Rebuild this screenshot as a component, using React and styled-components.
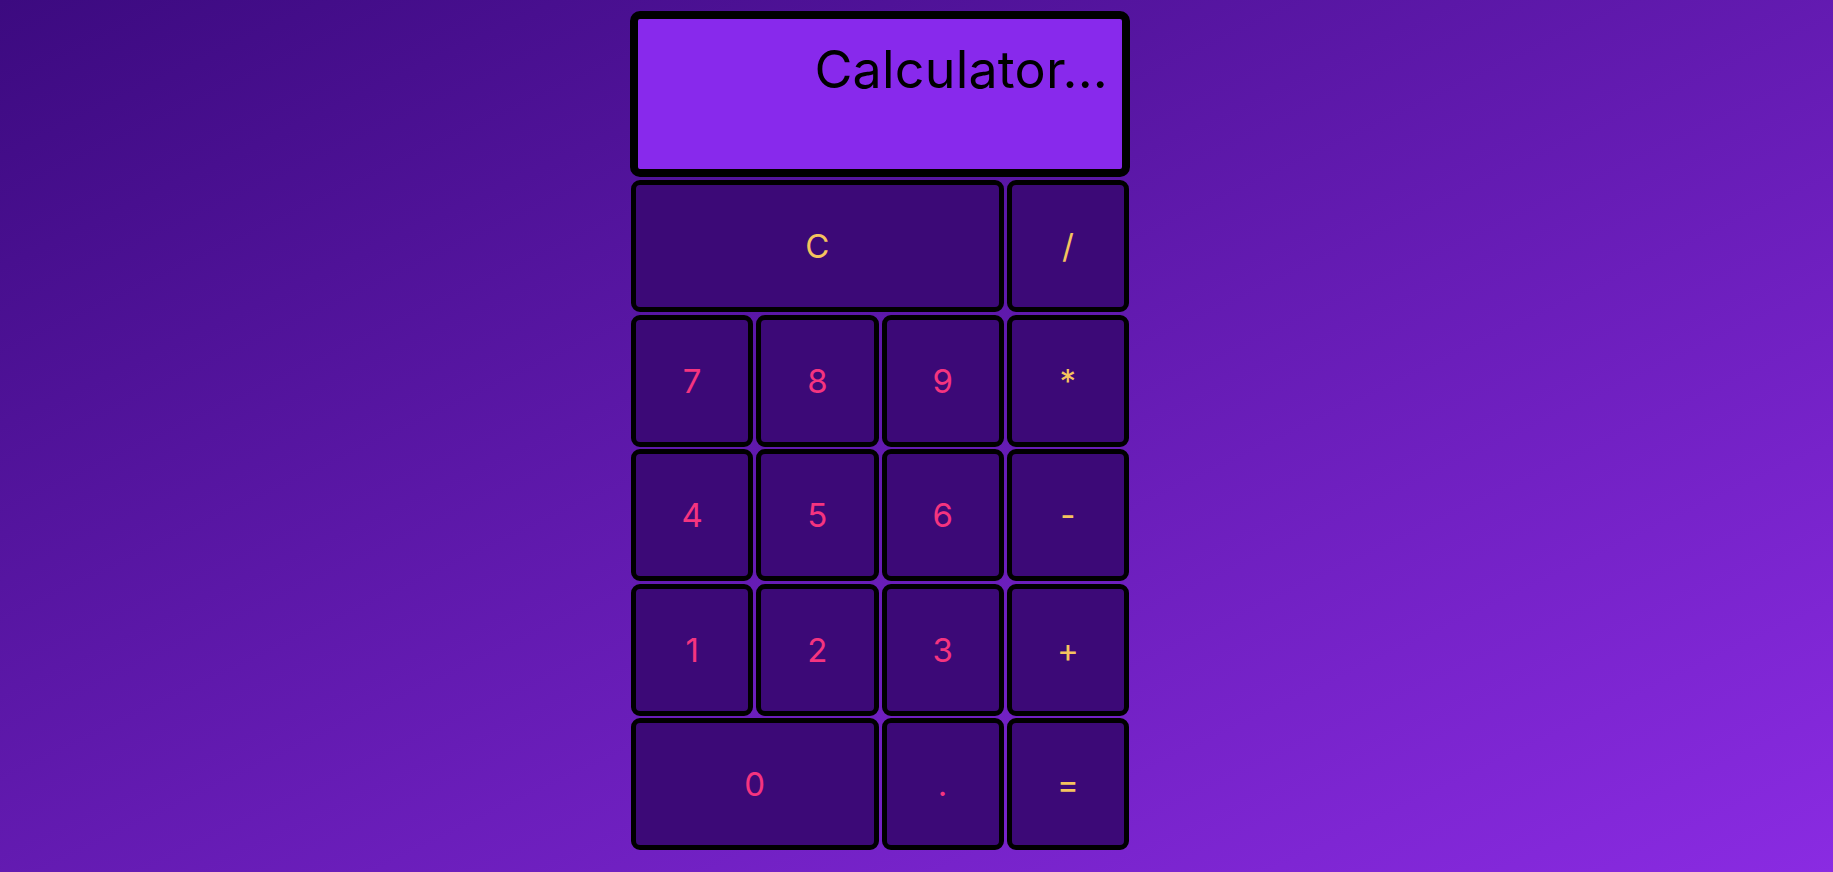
import React from "react";
import styled, { createGlobalStyle } from "styled-components";

const GlobalStyle = createGlobalStyle`
  html, body {
    margin: 0;
    padding: 0;
  }
  body {
    font-family: "Inter", "Liberation Sans", sans-serif;
  }
`;

const Page = styled.div`
  min-height: 100vh;
  box-sizing: border-box;
  display: flex;
  justify-content: center;
  align-items: flex-start;
  padding: 11px 73px 0 0;
  background: linear-gradient(to bottom right, #3c0a80, #8a2be2);
`;

const Calculator = styled.div`
  width: 500px;
  display: flex;
  flex-direction: column;
  gap: 3px;
`;

const Screen = styled.div`
  height: 166px;
  box-sizing: border-box;
  border: 8px solid #000;
  border-radius: 10px;
  background: #8829ec;
  padding: 25px 14px 0 0;
  text-align: right;
  font-size: 52px;
  line-height: 1;
  color: #000;
  letter-spacing: 0.2px;
`;

const Keys = styled.div`
  display: grid;
  grid-template-columns: repeat(4, 1fr);
  grid-auto-rows: 132px;
  gap: 2.5px 3px;
  padding: 0 1px;
`;

const Key = styled.button`
  grid-column: span ${(p) => p.$span || 1};
  box-sizing: border-box;
  border: 5px solid #000;
  border-radius: 9px;
  background: #3c0977;
  color: ${(p) => (p.$op ? "#f5c45e" : "#f5347f")};
  font-family: "Inter", "Liberation Sans", sans-serif;
  font-size: 33px;
  font-weight: 400;
  cursor: pointer;
  padding: 0;
`;

const keys = [
  { label: "C", op: true, span: 3 },
  { label: "/", op: true },
  { label: "7" },
  { label: "8" },
  { label: "9" },
  { label: "*", op: true },
  { label: "4" },
  { label: "5" },
  { label: "6" },
  { label: "-", op: true },
  { label: "1" },
  { label: "2" },
  { label: "3" },
  { label: "+", op: true },
  { label: "0", span: 2 },
  { label: "." },
  { label: "=", op: true },
];

export default function App() {
  return (
    <>
      <GlobalStyle />
      <Page>
        <Calculator>
          <Screen>Calculator...</Screen>
          <Keys>
            {keys.map((k) => (
              <Key key={k.label} $op={k.op} $span={k.span}>
                {k.label}
              </Key>
            ))}
          </Keys>
        </Calculator>
      </Page>
    </>
  );
}
